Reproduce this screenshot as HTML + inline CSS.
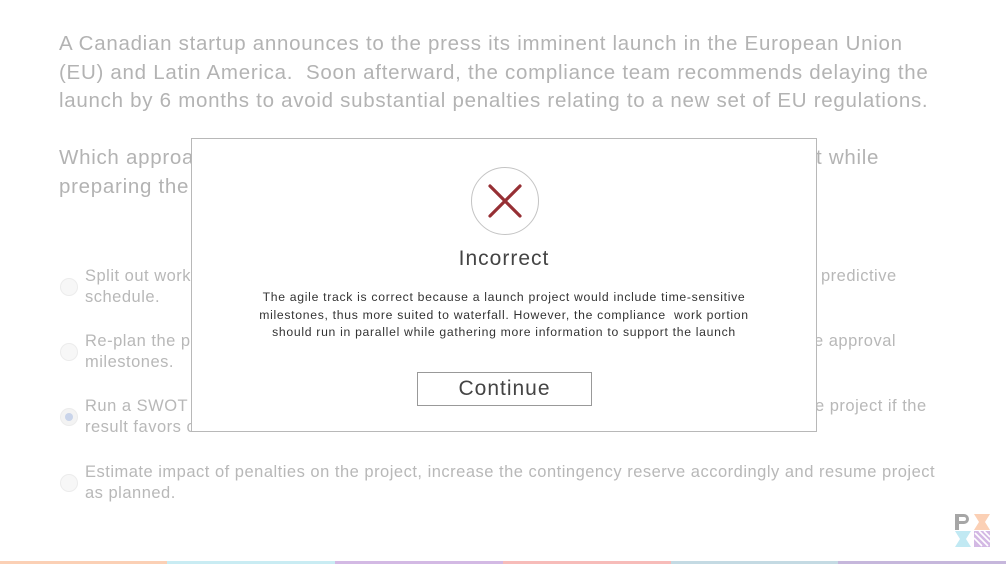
<!DOCTYPE html>
<html><head><style>
body{margin:0;width:1006px;height:564px;overflow:hidden;background:#fff;font-family:"Liberation Sans",sans-serif;position:relative}
.q{position:absolute;left:59px;color:#b3b3b3;font-size:20.5px;line-height:28.6px;white-space:nowrap;letter-spacing:0.72px}
.opt{position:absolute;color:#b8b8b8;font-size:16.5px;line-height:21px;white-space:nowrap;letter-spacing:0.5px}
.rad{position:absolute;left:60px;width:18px;height:18px;border-radius:50%;border:1px solid #ececec;background:#f7f7f7;box-sizing:border-box}
.modal{position:absolute;left:191px;top:138px;width:626px;height:294px;border:1px solid #b8b8b8;background:#fff;box-sizing:border-box}
.bar{position:absolute;top:561px;height:3px}
</style></head><body>
<div class="q" style="top:30px">A Canadian startup announces to the press its imminent launch in the European Union<br>(EU) and Latin America.&nbsp; Soon afterward, the compliance team recommends delaying the<br>launch by 6 months to avoid substantial penalties relating to a new set of EU regulations.</div>
<div class="q" style="top:144px">Which approach<br>preparing the</div>
<div class="q" style="top:144px;left:816px">t while</div>
<div class="rad" style="top:278px"></div>
<div class="opt" style="top:266px;left:85px">Split out work<br>schedule.</div>
<div class="opt" style="top:266px;left:821px">predictive</div>
<div class="rad" style="top:343px"></div>
<div class="opt" style="top:331px;left:85px">Re-plan the pr<br>milestones.</div>
<div class="opt" style="top:331px;left:814px">e approval</div>
<div class="rad" style="top:408px;background:#f3f3f3"><div style="position:absolute;left:4px;top:4px;width:8px;height:8px;border-radius:50%;background:#c9d4ea"></div></div>
<div class="opt" style="top:396px;left:85px">Run a SWOT a<br>result favors consumers.</div>
<div class="opt" style="top:396px;left:815px">e project if the</div>
<div class="rad" style="top:474px"></div>
<div class="opt" style="top:462px;left:85px">Estimate impact of penalties on the project, increase the contingency reserve accordingly and resume project<br>as planned.</div>
<div class="modal">
 <svg style="position:absolute;left:278px;top:27px" width="70" height="70" viewBox="0 0 70 70"><circle cx="35" cy="35" r="33.5" fill="#fff" stroke="#c4c4c4" stroke-width="1"/><path d="M20 20L50 50M50 20L20 50" stroke="#962f34" stroke-width="3.2" stroke-linecap="round"/></svg>
 <div style="position:absolute;left:0;width:100%;top:108px;text-align:center;font-size:21px;color:#444;letter-spacing:1px">Incorrect</div>
 <div style="position:absolute;left:0;width:100%;top:150px;text-align:center;font-size:12.2px;line-height:17.5px;color:#333;letter-spacing:0.7px">The agile track is correct because a launch project would include time-sensitive<br>milestones, thus more suited to waterfall. However, the compliance&nbsp; work portion<br>should run in parallel while gathering more information to support the launch</div>
 <div style="position:absolute;left:225px;top:233px;width:175px;height:34px;border:1px solid #999;box-sizing:border-box;text-align:center;font-size:21px;line-height:32px;color:#444;letter-spacing:1px">Continue</div>
</div>
<svg style="position:absolute;left:954px;top:513px" width="38" height="34" viewBox="0 0 38 34">
<path d="M1 1h9a5 5 0 0 1 0 10H5v6H1z M5 4v4h5a2 2 0 0 0 0-4z" fill="#a6a6a6" fill-rule="evenodd"/>
<path d="M20 1h16L31 9l5 8H20l5-8z" fill="#fbd0b5"/>
<path d="M1 18h16l-5 8 5 8H1l5-8z" fill="#c1e9f3"/>
<path d="M20 18h16v16H20z" fill="#d3b9e4"/>
<path d="M21 20l13 13M25 18l11 11M20 25l8 8M30 18l6 6" stroke="#fff" stroke-width="1.6"/>
</svg>
<div class="bar" style="left:0;width:167px;background:#fbd0b5"></div>
<div class="bar" style="left:167px;width:168px;background:#c9ecf3"></div>
<div class="bar" style="left:335px;width:168px;background:#d3b9e4"></div>
<div class="bar" style="left:503px;width:168px;background:#f7bcb9"></div>
<div class="bar" style="left:671px;width:167px;background:#c4dae3"></div>
<div class="bar" style="left:838px;width:168px;background:#c6b7dc"></div>
</body></html>
